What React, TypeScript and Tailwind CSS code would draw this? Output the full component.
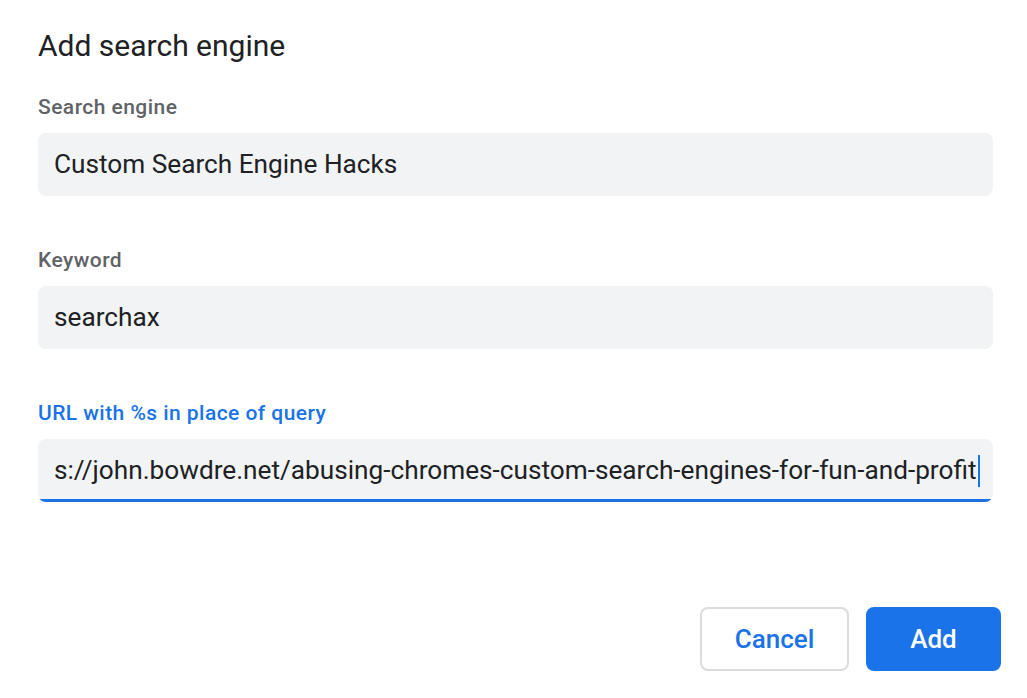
import React from "react"

const font = { fontFamily: "Roboto, 'Noto Sans', sans-serif" }

function Field({ label, value, focused }: { label: string, value: string, focused?: boolean }) {
    return (
        <div className="flex flex-col">
            <div className={`text-[21px] font-medium tracking-[0.45px] leading-[24px] ${focused ? "text-[#1a73e8]" : "text-[#5f6368]"}`}>
                {label}
            </div>
            <div className="relative mt-[14px] h-[63px] rounded-[8px] bg-[#f1f3f4] overflow-hidden">
                <div className="flex h-full items-center px-[16px] text-[26.2px] text-[#202124] whitespace-nowrap overflow-hidden">
                    <span>{value}</span>
                    {focused ? <span className="ml-[1px] h-[32px] w-[2px] shrink-0 bg-[#1a73e8]"></span> : ""}
                </div>
                {focused ? <div className="absolute bottom-0 left-0 right-0 h-[3px] bg-[#1a73e8]"></div> : ""}
            </div>
        </div>
    )
}

export default function App() {
    return (
        <div className="w-[1027px] h-[698px] bg-white overflow-hidden" style={font}>
            <div className="flex flex-col h-full pl-[38px] pr-[34px]">
                <div className="pt-[28px] text-[30px] leading-[36px] text-[#202124]">Add search engine</div>
                <div className="mt-[31px] flex flex-col gap-[52px]">
                    <Field label="Search engine" value="Custom Search Engine Hacks" />
                    <Field label="Keyword" value="searchax" />
                    <Field label="URL with %s in place of query" value="s://john.bowdre.net/abusing-chromes-custom-search-engines-for-fun-and-profit" focused />
                </div>
                <div className="mt-auto mb-[27px] flex justify-end gap-[17px]">
                    <button className="h-[64px] w-[149px] rounded-[8px] border-2 border-[#dadce0] bg-white text-[26px] font-medium text-[#1a73e8]">
                        Cancel
                    </button>
                    <button className="h-[64px] w-[135px] rounded-[8px] bg-[#1a73e8] text-[26px] font-medium text-white -mr-[8px]">
                        Add
                    </button>
                </div>
            </div>
        </div>
    )
}
